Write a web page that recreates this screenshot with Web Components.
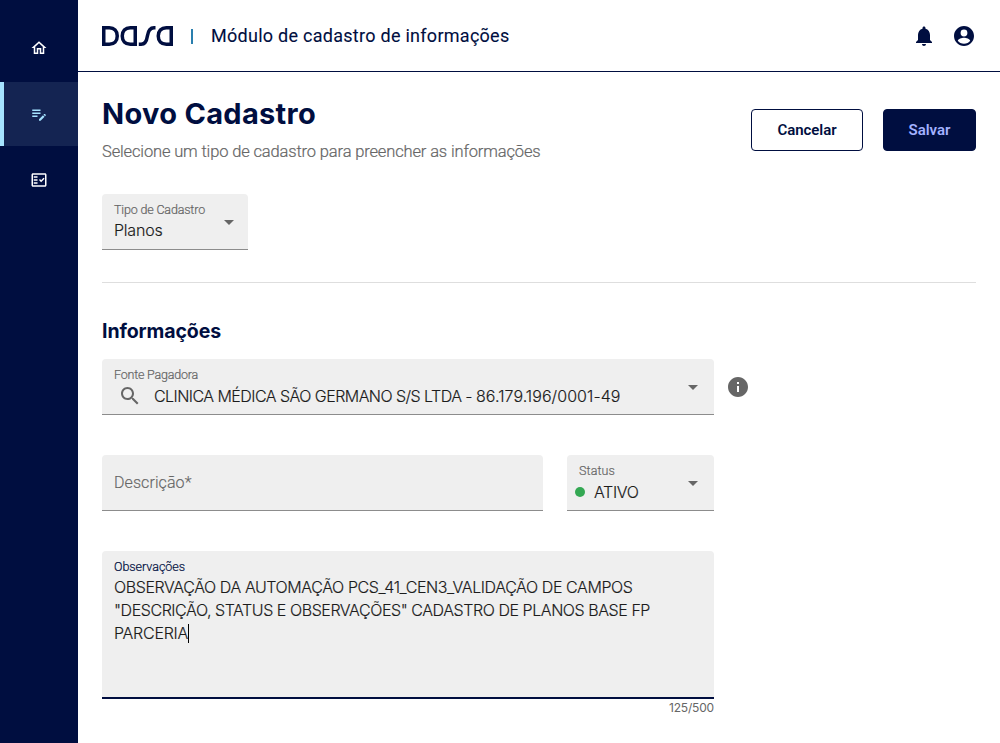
<!DOCTYPE html>
<html lang="pt-BR">
<head>
<meta charset="utf-8">
<title>Novo Cadastro</title>
<style>
html,body{margin:0;height:100%;background:#fff}
body{font-family:Roboto,"Liberation Sans",sans-serif;color:#000e40;overflow:hidden}
</style>
</head>
<body>
<cadastro-app></cadastro-app>
<script>
const define = (name, html, setup) => customElements.define(name, class extends HTMLElement {
  connectedCallback() {
    if (this.shadowRoot) return;
    const root = this.attachShadow({mode: 'open'});
    const t = document.createElement('template');
    t.innerHTML = html;
    root.append(t.content.cloneNode(true));
    if (setup) setup(this, root);
  }
});

/* Single line of text whose tracking is adjusted to a given advance width. */
define('ui-text', `<style>
:host{display:block;white-space:pre;width:max-content}
:host([inter]){font-family:Inter,Roboto,sans-serif}
span{display:inline-block}
</style><span></span>`, (el, root) => {
  const s = root.querySelector('span');
  s.textContent = el.getAttribute('value');
  const w = parseFloat(el.getAttribute('w'));
  if (w) s.style.letterSpacing = ((w - s.getBoundingClientRect().width) / s.textContent.length).toFixed(3) + 'px';
});

const icons = {
  home: 'M12 3 2 12h3v8h6v-6h2v6h6v-8h3L12 3zm5 15h-2v-6H9v6H7v-7.81l5-4.5 5 4.5V18z',
  edit: 'M3 10h11v2H3v-2zm0-2h11V6H3v2zm0 8h7v-2H3v2zm15.01-3.13.71-.71c.39-.39 1.02-.39 1.41 0l.71.71c.39.39.39 1.02 0 1.41l-.71.71-2.12-2.12zm-.71.71-5.3 5.3V21h2.12l5.3-5.3-2.12-2.12z',
  list: 'M20 3H4c-1.1 0-2 .9-2 2v14c0 1.1.9 2 2 2h16c1.1 0 2-.9 2-2V5c0-1.1-.9-2-2-2zm0 16H4V5h16v14zM19.41 10.42 17.99 9l-3.17 3.17-1.41-1.42L12 12.16 14.82 15zM5 7h5v2H5zM5 11h5v2H5zM5 15h5v2H5z',
  bell: 'M12 22c1.1 0 2-.9 2-2h-4c0 1.1.89 2 2 2zm6-6v-5c0-3.07-1.64-5.64-4.5-6.32V4c0-.83-.67-1.5-1.5-1.5s-1.5.67-1.5 1.5v.68C7.63 5.36 6 7.92 6 11v5l-2 2v1h16v-1l-2-2z',
  user: 'M12 2C6.48 2 2 6.48 2 12s4.48 10 10 10 10-4.48 10-10S17.52 2 12 2zm0 3.6a3.4 3.4 0 1 1 0 6.8 3.4 3.4 0 0 1 0-6.8zm0 14.1c-2.5 0-4.9-1.1-6.2-3 .4-1.9 3.9-3 6.2-3s5.8 1.1 6.2 3c-1.3 1.9-3.7 3-6.2 3z',
  search: 'M15.5 14h-.79l-.28-.27C15.41 12.59 16 11.11 16 9.5 16 5.91 13.09 3 9.5 3S3 5.91 3 9.5 5.91 16 9.5 16c1.61 0 3.09-.59 4.23-1.57l.27.28v.79l5 4.99L20.49 19l-4.99-5zm-6 0C7.01 14 5 11.99 5 9.5S7.01 5 9.5 5 14 7.01 14 9.5 11.99 14 9.5 14z',
  info: 'M12 2C6.48 2 2 6.48 2 12s4.48 10 10 10 10-4.48 10-10S17.52 2 12 2zm1 15h-2v-6h2v6zm0-8h-2V7h2v2z',
  arrow: 'M7 10l5 5 5-5z'
};
define('ui-icon', `<style>:host{display:block;flex:none}svg{display:block;fill:currentColor}</style>
<svg viewBox="0 0 24 24"><path/></svg>`, (el, root) => {
  const s = el.getAttribute('size') || 24;
  const svg = root.querySelector('svg');
  svg.setAttribute('width', s); svg.setAttribute('height', s);
  root.querySelector('path').setAttribute('d', icons[el.getAttribute('name')]);
});

define('brand-logo', `<style>:host{display:block}svg{display:block}</style>
<svg width="72" height="20" viewBox="0 0 72 20" fill="none" stroke="#000e40" stroke-width="3.5">
<path d="M1.75 1.75H7.3C12.2 1.75 15.25 5 15.25 10S12.2 18.25 7.3 18.25H1.75Z"/>
<path d="M33.25 1.75H28.3C23.2 1.75 20.25 5 20.25 10S23.2 18.25 28.3 18.25H33.25Z"/>
<path d="M36.8 18.25H39.2C43.2 18.25 44.6 15.5 45.4 10S48.2 1.75 52 1.75H53.5"/>
<path d="M69.25 1.75H64.3C59.2 1.75 56.25 5 56.25 10S59.2 18.25 64.3 18.25H69.25Z"/>
</svg>`);

define('nav-item', `<style>
:host{display:flex;height:64px;box-sizing:border-box;align-items:center;justify-content:center;color:#fff;border:solid transparent;border-width:0 4px}
:host([active]){background:#142452;border-left-color:#a5e3ff;border-right-color:#142452;color:#a5e3ff}
</style><slot></slot>`);

define('side-bar', `<style>
:host{display:flex;flex-direction:column;gap:2px;padding-top:16px;background:#000e40;width:78px;box-sizing:border-box;flex:none}
</style>
<nav-item><ui-icon name="home" size="18"></ui-icon></nav-item>
<nav-item active><ui-icon name="edit" size="18"></ui-icon></nav-item>
<nav-item><ui-icon name="list" size="18"></ui-icon></nav-item>`);

define('top-bar', `<style>
:host{display:flex;align-items:center;height:72px;box-sizing:border-box;border-bottom:1px solid #000e40;padding:0 24px}
.sep{width:2px;height:15px;background:#2a7fae;margin:1px 18px 0 17px}
.t{font-size:18px;line-height:24px;flex:1;font-weight:400;-webkit-text-stroke:.1px}
.i{display:flex;gap:16px}
</style>
<brand-logo></brand-logo><div class="sep"></div>
<div class="t"><ui-text w="298.5" value="Módulo de cadastro de informações"></ui-text></div>
<div class="i"><ui-icon name="bell"></ui-icon><ui-icon name="user"></ui-icon></div>`);

define('ui-button', `<style>
:host{display:flex;align-items:center;justify-content:center;height:42px;box-sizing:border-box;border:1px solid #000e40;border-radius:4px;font-weight:600;font-size:15px;line-height:20px;color:#000e40}
:host([primary]){background:#000e40;color:#a3b1ff}
</style><slot></slot>`);

define('form-field', `<style>
:host{display:flex;flex-direction:column;box-sizing:border-box;height:56px;background:#efefef;border-radius:4px 4px 0 0;border-bottom:1px solid #8c8c8c;padding:8px 12px 0;color:#666;position:relative}
:host([focused]){height:148px;border-bottom:2px solid #000e40;color:#000e40}
.l{font-size:12.5px;line-height:16px;height:16px;font-weight:300;-webkit-text-stroke:.2px}
.v{font-size:16px;line-height:24px;color:#1c1c1c;display:flex;align-items:center;font-weight:300;padding-top:1px;-webkit-text-stroke:.15px}
:host([compact]) .v{padding-top:0}
:host([empty]) .l{display:none}
:host([empty]) .v{color:#666;padding-top:8px}
:host([focused]) .v{display:block;line-height:23px}
.a{display:none;position:absolute;right:9px;top:16px}
:host([select]) .a{display:block}
:host([compact]) .a{right:7px}
</style>
<div class="l"><slot name="label"></slot></div><div class="v"><slot></slot></div>
<ui-icon class="a" name="arrow"></ui-icon>`);

define('cadastro-app', `<style>
:host{display:flex;height:743px}
.page{flex:1;display:flex;flex-direction:column}
main{padding:0 24px}
.head{display:flex;justify-content:space-between;padding-top:22px;height:100px}
h1{margin:0;font-size:29px;line-height:40px;font-weight:650}
.sub{font-size:16.5px;line-height:24px;color:#666;margin-top:5px;font-weight:300;padding-top:1px;-webkit-text-stroke:.2px}
.btns{display:flex;gap:20px;padding-top:15px}
.divider{height:1px;background:#dedede;margin:32px 0 36px}
h2{margin:0 0 16px;font-size:19.5px;line-height:24px;font-weight:650}
.row{display:flex;align-items:center;gap:12px;margin-bottom:40px;color:#666}
.dot{width:10px;height:10px;border-radius:50%;background:#34a853;margin:0 9px 0 -4px}
.mag{color:#666;margin:0 12px 0 4px}
.last{display:flex}
.caret{width:1px;height:19px;background:#000;margin-top:2px}
.count{font-size:12px;line-height:16px;color:#666;width:612px;display:flex;justify-content:flex-end;margin-top:1px}
</style>
<side-bar></side-bar>
<div class="page">
<top-bar></top-bar>
<main>
<div class="head">
<div><h1><ui-text inter w="214" value="Novo Cadastro"></ui-text></h1>
<div class="sub"><ui-text w="438.5" value="Selecione um tipo de cadastro para preencher as informações"></ui-text></div></div>
<div class="btns"><ui-button style="width:112px"><ui-text w="59" value="Cancelar"></ui-text></ui-button><ui-button primary style="width:93px"><ui-text w="42" value="Salvar"></ui-text></ui-button></div>
</div>
<form-field select compact style="width:146px"><ui-text slot="label" w="91" value="Tipo de Cadastro"></ui-text><ui-text inter w="48.5" value="Planos"></ui-text></form-field>
<div class="divider"></div>
<h2><ui-text inter w="119" value="Informações"></ui-text></h2>
<div class="row"><form-field select style="width:612px"><ui-text slot="label" w="84" value="Fonte Pagadora"></ui-text><ui-icon class="mag" name="search"></ui-icon><ui-text inter w="322" value="CLINICA MÉDICA SÃO GERMANO S/S LTDA - "></ui-text><ui-text inter w="144.5" value="86.179.196/0001-49"></ui-text></form-field><ui-icon name="info"></ui-icon></div>
<div class="row" style="gap:24px"><form-field empty style="width:441px"><ui-text w="77.5" value="Descrição*"></ui-text></form-field><form-field select style="width:147px"><ui-text slot="label" w="36" value="Status"></ui-text><span class="dot"></span><ui-text inter w="44.5" value="ATIVO"></ui-text></form-field></div>
<form-field focused style="width:612px"><ui-text slot="label" w="71" value="Observações"></ui-text>
<ui-text inter w="518.5" value="OBSERVAÇÃO DA AUTOMAÇÃO PCS_41_CEN3_VALIDAÇÃO DE CAMPOS"></ui-text>
<ui-text inter w="536" value="&quot;DESCRIÇÃO, STATUS E OBSERVAÇÕES&quot; CADASTRO DE PLANOS BASE FP"></ui-text>
<div class="last"><ui-text inter w="74" value="PARCERIA"></ui-text><span class="caret"></span></div></form-field>
<div class="count"><ui-text inter w="45" value="125/500"></ui-text></div>
</main>
</div>`);
</script>
</body>
</html>
